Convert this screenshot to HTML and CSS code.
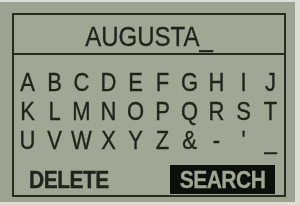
FILE: index.html
```html
<!DOCTYPE html>
<html>
    <head>
        <meta charset="UTF-8">
        <title>Name Entry</title>
        <link rel="stylesheet" href="styles.css">
    </head>
    <body>
        <div class="Screen">
            <div class="Panel">
                <div class="EntryLine"><span>AUGUSTA_</span></div>
                <div class="Keypad">
                    <span>A</span><span>B</span><span>C</span><span>D</span><span>E</span>
                    <span>F</span><span>G</span><span>H</span><span>I</span><span>J</span>
                    <span>K</span><span>L</span><span>M</span><span>N</span><span>O</span>
                    <span>P</span><span>Q</span><span>R</span><span>S</span><span>T</span>
                    <span>U</span><span>V</span><span>W</span><span>X</span><span>Y</span>
                    <span>Z</span><span>&amp;</span><span>-</span><span>'</span><span>_</span>
                </div>
                <div class="Actions">
                    <div class="Action"><span>DELETE</span></div>
                    <div class="Action Selected"><span>SEARCH</span></div>
                </div>
            </div>
        </div>
    </body>
</html>
```

FILE: styles.css
```css
body {
    margin: 0;
    background: #dcded6;
    font-family: "Liberation Sans", Arial, sans-serif;
}

.Screen {
    width: 295px;
    height: 200px;
    margin-top: 2px;
    padding: 11px 0 0 12px;
    box-sizing: border-box;
    background: #9ea290;
    filter: blur(0.4px);
}

.Panel {
    width: 274px;
    height: 184px;
    border: 2px solid #262b20;
    box-sizing: border-box;
    background: #a2a694;
    color: #20251b;
    display: flex;
    flex-direction: column;
    -webkit-text-stroke: 0.3px;
}

.Panel span {
    display: inline-block;
}

.EntryLine {
    height: 40px;
    padding-top: 2px;
    box-sizing: border-box;
    line-height: 40px;
    font-size: 24px;
    text-align: center;
    border-bottom: 2px solid #262b20;
}

.EntryLine span {
    transform: scaleY(1.14);
}

.Keypad {
    display: grid;
    grid-template-columns: repeat(10, 1fr);
    grid-auto-rows: 29px;
    padding-top: 13px;
    font-size: 22px;
    line-height: 29px;
    text-align: center;
}

.Keypad span {
    transform: scaleY(1.15);
}

.Actions {
    flex: 1;
    display: flex;
    align-items: flex-end;
    justify-content: space-between;
    padding: 0 9px 1px 15px;
}

.Action {
    font-size: 21px;
    font-weight: bold;
    line-height: 29px;
    letter-spacing: -0.5px;
}

.Action span {
    transform: scaleY(1.12);
}

.Action.Selected {
    width: 105px;
    height: 29px;
    text-align: center;
    background: #0d0f0b;
    color: #a2a694;
}
```
